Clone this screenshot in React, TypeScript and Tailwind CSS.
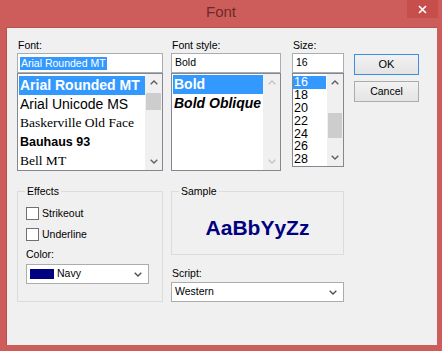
import React from 'react';
import clsx from 'clsx';

const Chevron = ({ dir, color = '#606060' }: { dir: 'up' | 'down'; color?: string }) => (
  <svg width="8" height="5" viewBox="0 0 8 5">
    <polyline
      points={dir === 'up' ? '0.7,4.3 4,1 7.3,4.3' : '0.7,0.7 4,4 7.3,0.7'}
      fill="none"
      stroke={color}
      strokeWidth="1.4"
    />
  </svg>
);

type ScrollProps = { thumbTop?: number; thumbHeight?: number; disabled?: boolean; width: string };

function ScrollBar({ thumbTop = 0, thumbHeight = 0, disabled, width }: ScrollProps) {
  const c = disabled ? '#c4c4c4' : '#606060';
  return (
    <div className={clsx('flex flex-col bg-[#f0f0f0] shrink-0', width)}>
      <div className="h-[17px] flex items-center justify-center">
        <Chevron dir="up" color={c} />
      </div>
      <div className="flex-1">
        {!disabled && (
          <div className="bg-[#cdcdcd] mx-[1px]" style={{ marginTop: thumbTop, height: thumbHeight }} />
        )}
      </div>
      <div className="h-[17px] flex items-center justify-center">
        <Chevron dir="down" color={c} />
      </div>
    </div>
  );
}

function Label({ children }: { children: React.ReactNode }) {
  return <div className="h-[14px] leading-[13px] text-[10.5px] text-black pl-[1px]">{children}</div>;
}

function Combo({ children, width }: { children: React.ReactNode; width: string }) {
  return (
    <div className={clsx('h-[20px] border border-[#acacac] bg-white flex items-center pl-[3px] pr-[6px]', width)}>
      <div className="flex-1 flex items-center text-[10.5px]">{children}</div>
      <Chevron dir="down" color="#505050" />
    </div>
  );
}

const fonts = [
  { name: 'Arial Rounded MT', cls: "font-bold text-[14px] font-['Liberation_Sans',Arial,sans-serif]" },
  { name: 'Arial Unicode MS', cls: "text-[14px] font-['Liberation_Sans',Arial,sans-serif]" },
  { name: 'Baskerville Old Face', cls: "text-[13.5px] font-['Liberation_Serif','Times_New_Roman',serif]" },
  { name: 'Bauhaus 93', cls: "font-black text-[12.5px] font-['Liberation_Sans',Arial,sans-serif]" },
  { name: 'Bell MT', cls: "text-[13.5px] font-['Liberation_Serif','Times_New_Roman',serif]" },
];

const sizes = ['16', '18', '20', '22', '24', '26', '28'];

export default function App() {
  return (
    <div className="w-[442px] h-[351px] bg-[#cd5d5a] flex flex-col font-['Liberation_Sans',Arial,sans-serif] overflow-hidden">
      {/* Title bar */}
      <div className="relative h-[27px] flex justify-center pt-[2px]">
        <span className="text-[15px] leading-[20px] text-[#6b2b29]">Font</span>
        <div className="absolute right-[4px] top-0 w-[31px] h-[18px] bg-[#c64f4c] flex items-center justify-center">
          <svg width="9" height="9" viewBox="0 0 9 9">
            <path d="M1 1 L8 8 M8 1 L1 8" stroke="white" strokeWidth="1.6" />
          </svg>
        </div>
      </div>

      {/* Client area */}
      <div className="ml-[6px] w-[431px] h-[318px] bg-[#f0f0f0] border-t border-l border-[#b8524f]">
        {/* Upper row */}
        <div className="flex items-start pl-[10px] pt-[11px]">
          {/* Font */}
          <div className="w-[146px]">
            <Label>Font:</Label>
            <div className="h-[20px] border border-[#abadb3] bg-white flex items-center pl-[2px]">
              <span className="bg-[#3399ff] text-white text-[10.5px] leading-[13px] px-[1px]">Arial Rounded MT</span>
            </div>
            <div className="h-[98px] border border-[#828790] bg-white flex">
              <div className="flex-1 pl-[1px] pt-[2px]">
                {fonts.map((f, i) => (
                  <div
                    key={f.name}
                    className={clsx(
                      'h-[19px] flex items-center pl-[1px] whitespace-nowrap overflow-hidden',
                      f.cls,
                      i === 0 ? 'bg-[#3399ff] text-white' : 'text-black',
                    )}
                  >
                    {f.name}
                  </div>
                ))}
              </div>
              <ScrollBar width="w-[17px]" thumbTop={2} thumbHeight={17} />
            </div>
          </div>

          {/* Font style */}
          <div className="w-[110px] ml-[8px]">
            <Label>Font style:</Label>
            <div className="h-[20px] border border-[#abadb3] bg-white flex items-center pl-[3px] text-[10.5px]">Bold</div>
            <div className="h-[98px] border border-[#828790] bg-white flex">
              <div className="flex-1 pl-[1px] pt-[1px] text-[14px]">
                <div className="h-[19px] flex items-center pl-[1px] bg-[#3399ff] text-white font-bold">Bold</div>
                <div className="h-[19px] flex items-center pl-[1px] font-bold italic text-black">Bold Oblique</div>
              </div>
              <ScrollBar width="w-[17px]" disabled />
            </div>
          </div>

          {/* Size */}
          <div className="w-[52px] ml-[11px]">
            <Label>Size:</Label>
            <div className="h-[20px] border border-[#abadb3] bg-white flex items-center pl-[3px] text-[10.5px]">16</div>
            <div className="h-[94px] border border-[#828790] bg-white flex">
              <div className="flex-1 pt-[2px] text-[12.5px]">
                {sizes.map((s, i) => (
                  <div
                    key={s}
                    className={clsx(
                      'h-[12.8px] leading-[12px] flex items-center pl-[1px] mr-[1px]',
                      i === 0 ? 'bg-[#3399ff] text-white' : 'text-black',
                    )}
                  >
                    {s}
                  </div>
                ))}
              </div>
              <ScrollBar width="w-[16px]" thumbTop={22} thumbHeight={25} />
            </div>
          </div>

          {/* Buttons */}
          <div className="w-[65px] ml-[10px] pt-[15px] flex flex-col gap-[6px]">
            <div className="h-[21px] border border-[#3c8fe0] bg-gradient-to-b from-[#f2f2f2] to-[#e4e4e4] flex items-center justify-center text-[11px] text-black">
              OK
            </div>
            <div className="h-[21px] border border-[#acacac] bg-gradient-to-b from-[#f2f2f2] to-[#e4e4e4] flex items-center justify-center text-[10.5px] text-black">
              Cancel
            </div>
          </div>
        </div>

        {/* Lower row */}
        <div className="flex items-start pl-[10px] mt-[14px]">
          <fieldset className="w-[146px] h-[117px] border border-[#dcdcdc]">
            <legend className="ml-[7px] px-[2px] text-[10.5px] leading-[13px]">Effects</legend>
            <div className="pl-[8px] pt-[9px] text-[10.5px]">
              <div className="h-[13px] flex items-center gap-[3px]">
                <div className="w-[13px] h-[13px] border border-[#707070] bg-white" />
                <span>Strikeout</span>
              </div>
              <div className="h-[13px] mt-[8px] flex items-center gap-[3px]">
                <div className="w-[13px] h-[13px] border border-[#707070] bg-white" />
                <span>Underline</span>
              </div>
              <div className="h-[13px] leading-[13px] mt-[7px]">Color:</div>
              <div className="mt-[3px]">
                <Combo width="w-[123px]">
                  <div className="w-[24px] h-[10px] bg-[#000080] mr-[3px]" />
                  <span>Navy</span>
                </Combo>
              </div>
            </div>
          </fieldset>

          <div className="w-[173px] ml-[8px]">
            <fieldset className="h-[70px] border border-[#dcdcdc]">
              <legend className="ml-[7px] px-[2px] text-[10.5px] leading-[13px]">Sample</legend>
              <div className="h-[55px] flex items-center justify-center pt-[3px]">
                <span className="text-[21px] font-bold text-[#000080] leading-none">AaBbYyZz</span>
              </div>
            </fieldset>
            <div className="mt-[12px] h-[13px] leading-[13px] text-[10.5px] pl-[1px]">Script:</div>
            <div className="mt-[2px]">
              <Combo width="w-[173px]">
                <span>Western</span>
              </Combo>
            </div>
          </div>
        </div>
      </div>
    </div>
  );
}
